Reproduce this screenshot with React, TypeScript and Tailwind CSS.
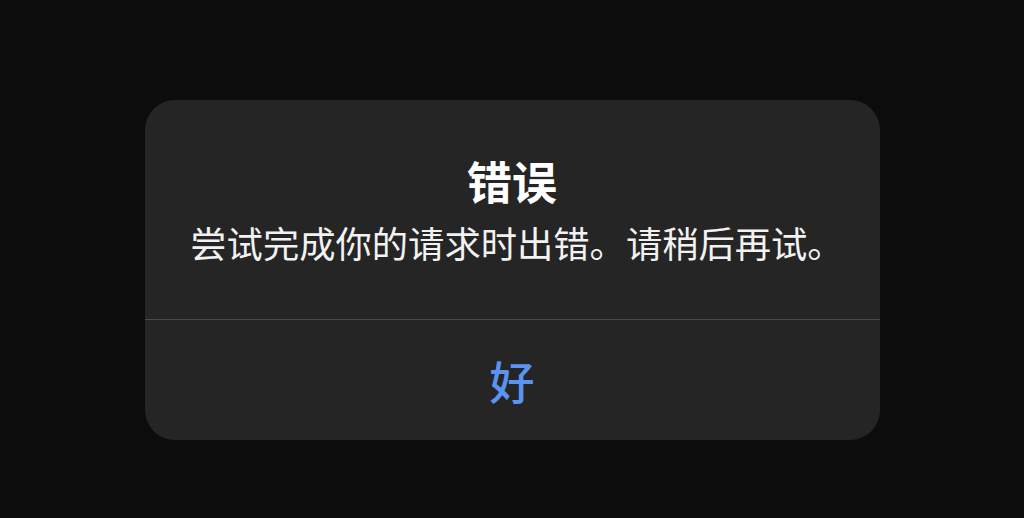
export default function App() {
  return (
    <div
      className="w-[1024px] h-[518px] bg-[#0c0c0c] flex justify-center"
      style={{ fontFamily: '"Noto Sans CJK SC", "Noto Sans", sans-serif' }}
    >
      <div className="mt-[100px] w-[735px] h-[340px] rounded-[30px] bg-[#252525] flex flex-col overflow-hidden">
        {/* Body */}
        <div className="h-[219px] flex flex-col items-center pt-[54px]">
          <h1 className="text-[45px] leading-[54px] font-bold text-white">错误</h1>
          <p className="mt-[12px] ml-[10px] text-[36.3px] leading-[44px] text-[#f2f2f2]">
            尝试完成你的请求时出错。请稍后再试。
          </p>
        </div>
        <div className="h-px bg-[#4a4a4a]" />
        {/* Action */}
        <button className="flex-1 flex items-center justify-center text-[45px] leading-none font-medium text-[#5b93f2]">
          好
        </button>
      </div>
    </div>
  );
}
